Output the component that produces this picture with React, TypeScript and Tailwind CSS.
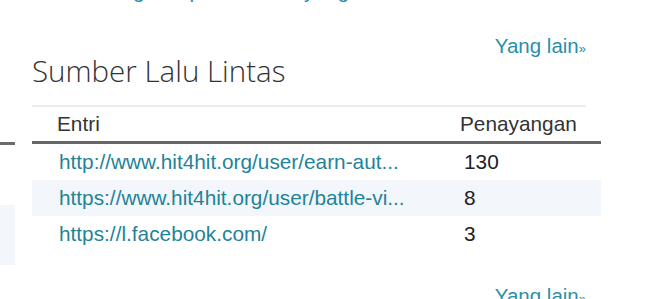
const rows = [
  { url: "http://www.hit4hit.org/user/earn-aut...", views: "130" },
  { url: "https://www.hit4hit.org/user/battle-vi...", views: "8" },
  { url: "https://l.facebook.com/", views: "3" },
];

export default function App() {
  return (
    <div className="relative h-[299px] w-[650px] overflow-hidden bg-white font-['Liberation_Sans',Arial,sans-serif]">
      <div className="-mt-[19px] h-[20px] whitespace-nowrap pl-[82px] text-[20.8px] leading-[20px] text-[#2a8fa8]">
        Lihat grafik pada laman yang
      </div>

      <div className="flex">
        <div className="w-[15px] shrink-0">
          <div className="mt-[141px] h-[3px] bg-[#6b6b6b]" />
          <div className="mt-[60px] h-[60px] bg-[#f3f6fa]" />
        </div>

        <div className="ml-[17px] w-[569px]">
          <div className="w-[554px] pt-[35px]">
            <div className="text-right text-[20.5px] leading-[20px] text-[#2a8fa8]">
              Yang lain<span className="text-[13px]">»</span>
            </div>
            <h2 className="-mt-[8px] font-['Open_Sans',sans-serif] text-[29.5px] font-light leading-[40px] text-[#333]">
              Sumber Lalu Lintas
            </h2>
            <div className="mt-[14px] h-[2px] bg-[#ececec]" />
          </div>

          <div className="flex h-[37px] items-center border-b-[3px] border-[#666] text-[20.8px] text-[#333]">
            <div className="flex-1 pl-[25px]">Entri</div>
            <div className="w-[142px] pl-[1px]">Penayangan</div>
          </div>

          {rows.map((r, i) => (
            <div
              key={r.url}
              className={`flex h-[36px] items-center text-[20.8px] ${i % 2 === 1 ? "bg-[#f3f6fa]" : ""}`}
            >
              <div className="flex-1 pl-[27px] text-[#1f8399]">{r.url}</div>
              <div className="w-[137px] text-[#222]">{r.views}</div>
            </div>
          ))}

          <div className="mt-[34px] w-[554px] text-right text-[20.5px] leading-[20px] text-[#2a8fa8]">
            Yang lain<span className="text-[13px]">»</span>
          </div>
        </div>
      </div>
    </div>
  );
}
